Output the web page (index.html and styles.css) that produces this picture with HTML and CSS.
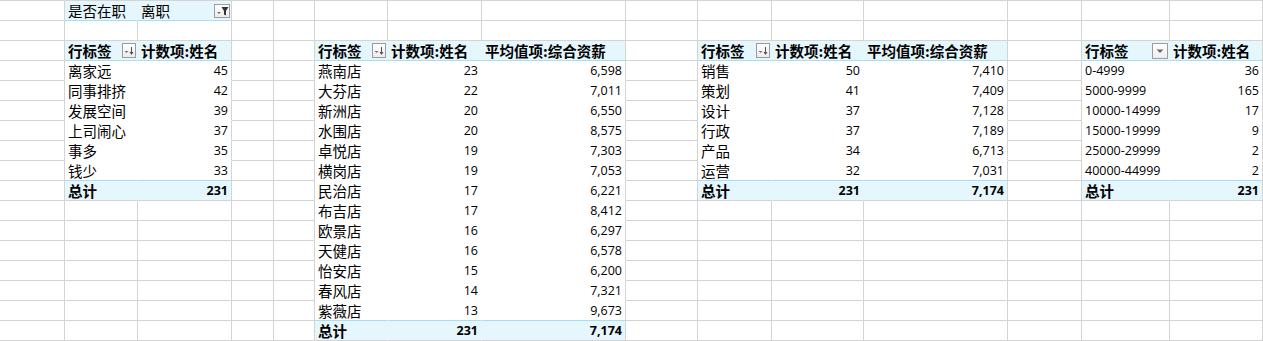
FILE: index.html
```html
<!DOCTYPE html>
<html lang="zh-CN">
<head>
<meta charset="utf-8">
<title>数据透视表</title>
<link rel="stylesheet" href="styles.css">
</head>
<body>
<table class="sheet">
<colgroup>
<col class="c1"><col class="c2"><col class="c3"><col class="c4"><col class="c5"><col class="c6"><col class="c7"><col class="c8"><col class="c9"><col class="c10"><col class="c11"><col class="c12"><col class="c13"><col class="c14"><col class="c15">
</colgroup>
<tbody>
<tr>
<td></td>
<td class="f">是否在职</td>
<td class="f e pb"><div class="lab"><span>离职</span><span class="btn filt"><svg width="14" height="12" viewBox="0 0 14 12"><polygon points="2,7 6,7 4,9" fill="#707070"/><polygon points="6.5,2 13.5,2 11,6 11,10.5 9,9.5 9,6" fill="#333"/></svg></span></div></td>
<td></td><td></td><td></td><td></td><td></td><td></td><td></td><td></td><td></td><td></td><td></td><td></td>
</tr>
<tr>
<td></td><td></td><td></td><td></td><td></td><td></td><td></td><td></td><td></td><td></td><td></td><td></td><td></td><td></td><td></td>
</tr>
<tr>
<td></td>
<td class="h pb"><div class="lab"><span>行标签</span><span class="btn sort"><svg width="12" height="13" viewBox="0 0 12 13"><polygon points="1.5,7 5.5,7 3.5,9" fill="#707070"/><line x1="8.5" y1="3" x2="8.5" y2="10" stroke="#505050" stroke-width="1"/><polygon points="6.5,8 10.5,8 8.5,11" fill="#505050"/></svg></span></div></td>
<td class="h e">计数项:姓名</td>
<td></td><td></td>
<td class="h pb"><div class="lab"><span>行标签</span><span class="btn sort"><svg width="12" height="13" viewBox="0 0 12 13"><polygon points="1.5,7 5.5,7 3.5,9" fill="#707070"/><line x1="8.5" y1="3" x2="8.5" y2="10" stroke="#505050" stroke-width="1"/><polygon points="6.5,8 10.5,8 8.5,11" fill="#505050"/></svg></span></div></td>
<td class="h">计数项:姓名</td>
<td class="h e">平均值项:综合资薪</td>
<td></td>
<td class="h pb"><div class="lab"><span>行标签</span><span class="btn sort"><svg width="12" height="13" viewBox="0 0 12 13"><polygon points="1.5,7 5.5,7 3.5,9" fill="#707070"/><line x1="8.5" y1="3" x2="8.5" y2="10" stroke="#505050" stroke-width="1"/><polygon points="6.5,8 10.5,8 8.5,11" fill="#505050"/></svg></span></div></td>
<td class="h">计数项:姓名</td>
<td class="h e">平均值项:综合资薪</td>
<td></td>
<td class="h pb"><div class="lab"><span>行标签</span><span class="btn drop"><svg width="14" height="14" viewBox="0 0 14 14"><polygon points="3.5,5.5 10.5,5.5 7,9" fill="#6a6a6a"/></svg></span></div></td>
<td class="h e">计数项:姓名</td>
</tr>
<tr>
<td></td><td class="d">离家远</td><td class="d e n">45</td><td></td><td></td>
<td class="d">燕南店</td><td class="d n">23</td><td class="d e n">6,598</td><td></td>
<td class="d">销售</td><td class="d n">50</td><td class="d e n">7,410</td><td></td>
<td class="d nl">0-4999</td><td class="d e n">36</td>
</tr>
<tr>
<td></td><td class="d">同事排挤</td><td class="d e n">42</td><td></td><td></td>
<td class="d">大芬店</td><td class="d n">22</td><td class="d e n">7,011</td><td></td>
<td class="d">策划</td><td class="d n">41</td><td class="d e n">7,409</td><td></td>
<td class="d nl">5000-9999</td><td class="d e n">165</td>
</tr>
<tr>
<td></td><td class="d">发展空间</td><td class="d e n">39</td><td></td><td></td>
<td class="d">新洲店</td><td class="d n">20</td><td class="d e n">6,550</td><td></td>
<td class="d">设计</td><td class="d n">37</td><td class="d e n">7,128</td><td></td>
<td class="d nl">10000-14999</td><td class="d e n">17</td>
</tr>
<tr>
<td></td><td class="d">上司闹心</td><td class="d e n">37</td><td></td><td></td>
<td class="d">水围店</td><td class="d n">20</td><td class="d e n">8,575</td><td></td>
<td class="d">行政</td><td class="d n">37</td><td class="d e n">7,189</td><td></td>
<td class="d nl">15000-19999</td><td class="d e n">9</td>
</tr>
<tr>
<td></td><td class="d">事多</td><td class="d e n">35</td><td></td><td></td>
<td class="d">卓悦店</td><td class="d n">19</td><td class="d e n">7,303</td><td></td>
<td class="d">产品</td><td class="d n">34</td><td class="d e n">6,713</td><td></td>
<td class="d nl">25000-29999</td><td class="d e n">2</td>
</tr>
<tr>
<td></td><td class="d b">钱少</td><td class="d e b n">33</td><td></td><td></td>
<td class="d">横岗店</td><td class="d n">19</td><td class="d e n">7,053</td><td></td>
<td class="d b">运营</td><td class="d b n">32</td><td class="d e b n">7,031</td><td></td>
<td class="d b nl">40000-44999</td><td class="d e b n">2</td>
</tr>
<tr>
<td></td><td class="t">总计</td><td class="t e n">231</td><td></td><td></td>
<td class="d">民治店</td><td class="d n">17</td><td class="d e n">6,221</td><td></td>
<td class="t">总计</td><td class="t n">231</td><td class="t e n">7,174</td><td></td>
<td class="t">总计</td><td class="t e n">231</td>
</tr>
<tr>
<td></td><td></td><td></td><td></td><td></td>
<td class="d">布吉店</td><td class="d n">17</td><td class="d e n">8,412</td>
<td></td><td></td><td></td><td></td><td></td><td></td><td></td>
</tr>
<tr>
<td></td><td></td><td></td><td></td><td></td>
<td class="d">欧景店</td><td class="d n">16</td><td class="d e n">6,297</td>
<td></td><td></td><td></td><td></td><td></td><td></td><td></td>
</tr>
<tr>
<td></td><td></td><td></td><td></td><td></td>
<td class="d">天健店</td><td class="d n">16</td><td class="d e n">6,578</td>
<td></td><td></td><td></td><td></td><td></td><td></td><td></td>
</tr>
<tr>
<td></td><td></td><td></td><td></td><td></td>
<td class="d">怡安店</td><td class="d n">15</td><td class="d e n">6,200</td>
<td></td><td></td><td></td><td></td><td></td><td></td><td></td>
</tr>
<tr>
<td></td><td></td><td></td><td></td><td></td>
<td class="d">春风店</td><td class="d n">14</td><td class="d e n">7,321</td>
<td></td><td></td><td></td><td></td><td></td><td></td><td></td>
</tr>
<tr>
<td></td><td></td><td></td><td></td><td></td>
<td class="d b">紫薇店</td><td class="d b n">13</td><td class="d e b n">9,673</td>
<td></td><td></td><td></td><td></td><td></td><td></td><td></td>
</tr>
<tr>
<td></td><td></td><td></td><td></td><td></td>
<td class="t">总计</td><td class="t n">231</td><td class="t e n">7,174</td>
<td></td><td></td><td></td><td></td><td></td><td></td><td></td>
</tr>
</tbody>
</table>
</body>
</html>
```

FILE: styles.css
```css
html, body {
  margin: 0;
  padding: 0;
  background: #ffffff;
  overflow: hidden;
}

body {
  font-family: "Noto Sans CJK SC", "Noto Sans", sans-serif;
  font-size: 14.5px;
  color: #000000;
}

.sheet {
  border-collapse: separate;
  border-spacing: 0;
  table-layout: fixed;
  width: 1263px;
  border-top: 1px solid #d4d4d4;
}

.c1 { width: 65px; }
.c2 { width: 73px; }
.c3 { width: 94px; }
.c4 { width: 42px; }
.c5 { width: 41px; }
.c6 { width: 73px; }
.c7 { width: 94px; }
.c8 { width: 144px; }
.c9 { width: 72px; }
.c10 { width: 74px; }
.c11 { width: 92px; }
.c12 { width: 144px; }
.c13 { width: 74px; }
.c14 { width: 88px; }
.c15 { width: 93px; }

.sheet tr {
  height: 20px;
}

.sheet td {
  box-sizing: border-box;
  height: 20px;
  padding: 0 3px;
  border-right: 1px solid #d4d4d4;
  border-bottom: 1px solid #d4d4d4;
  line-height: 19px;
  white-space: nowrap;
  overflow: hidden;
  vertical-align: middle;
}

/* pivot data cells: hide internal gridlines */
.sheet td.d {
  background: #ffffff;
  border-right-color: #ffffff;
  border-bottom-color: #ffffff;
}

/* pivot header / filter / total cells */
.sheet td.h,
.sheet td.f {
  background: #e5f6fc;
  border-right-color: #e5f6fc;
  border-bottom-color: #a9ddf1;
}

.sheet td.h {
  font-weight: bold;
}

.sheet td.t {
  background: #e5f6fc;
  border-right-color: #e5f6fc;
  font-weight: bold;
}

/* last data row: light blue rule above the total */
.sheet td.b {
  border-bottom-color: #a9ddf1;
}

/* right edge of a pivot table keeps its gridline */
.sheet td.e {
  border-right-color: #d4d4d4;
}

.sheet td.pb {
  padding-right: 1px;
}

/* numeric cells */
.sheet td.n {
  text-align: right;
  font-family: "Open Sans", "Noto Sans", sans-serif;
  font-size: 12.5px;
}

.sheet td.nl {
  font-family: "Open Sans", "Noto Sans", sans-serif;
  font-size: 12.5px;
}

.lab {
  display: flex;
  align-items: center;
  justify-content: space-between;
  height: 19px;
}

.btn {
  box-sizing: border-box;
  display: flex;
  align-items: center;
  justify-content: center;
  border: 1px solid #9c9c9c;
  background: linear-gradient(#ffffff, #ececec);
}

.btn svg {
  display: block;
}

.sort {
  width: 14px;
  height: 15px;
}

.filt {
  width: 16px;
  height: 14px;
}

.drop {
  width: 16px;
  height: 16px;
}
```
